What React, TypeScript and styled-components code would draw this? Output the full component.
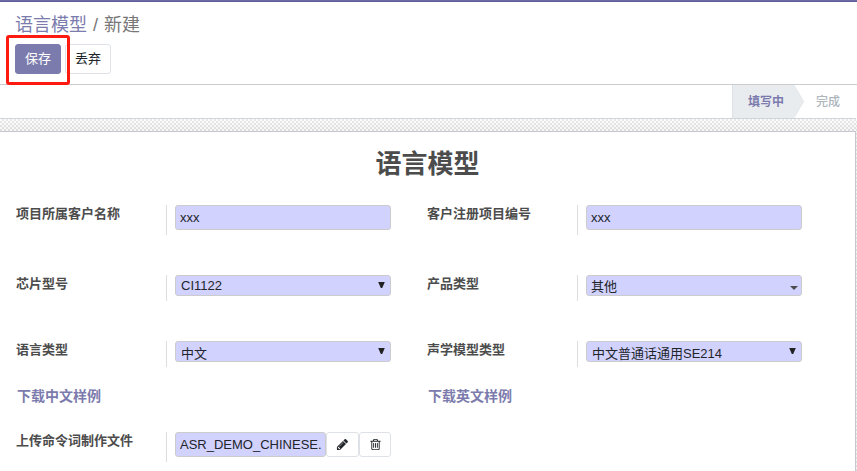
import React from "react";
import styled, { createGlobalStyle } from "styled-components";

const GlobalStyle = createGlobalStyle`
  *, *::before, *::after { box-sizing: border-box; }
  html, body { margin: 0; padding: 0; overflow: hidden; }
  body {
    background: #fff;
    color: #4c4c4c;
    font: 13px/19px "Liberation Sans", "Noto Sans CJK SC", sans-serif;
  }
  button { font: inherit; margin: 0; }
`;

const Page = styled.div`
  height: 471px;
  display: flex;
  flex-direction: column;
  overflow: hidden;
`;

const TopBar = styled.div`
  height: 2px;
  flex: none;
  background: #5f5e97;
  border-top: 1px solid #6c6ba6;
`;

const ControlPanel = styled.header`
  height: 83px;
  flex: none;
  padding: 10px 15px 0;
  border-bottom: 1px solid #cccccc;
`;

const Breadcrumb = styled.nav`
  display: flex;
  height: 27px;
  font-size: 18px;
  line-height: 27px;
  color: #777;
  white-space: pre;
`;

const Crumb = styled.span`
  color: #7c7bad;
`;

const Separator = styled.span`
  width: 17px;
  text-align: center;
`;

const Actions = styled.div`
  display: flex;
  gap: 4px;
  margin-top: 5px;
`;

const Highlighted = styled.div`
  position: relative;
`;

const HighlightFrame = styled.span`
  position: absolute;
  left: -9px;
  top: -9px;
  width: 64px;
  height: 50px;
  border: 3px solid #ff1a10;
  border-radius: 3px;
  z-index: 1;
`;

const Button = styled.button<{ $primary?: boolean }>`
  display: block;
  width: 46px;
  height: 30px;
  padding: 0;
  line-height: 28px;
  border-radius: 3px;
  border: 1px solid ${(p) => (p.$primary ? "#7c7bad" : "#dee2e6")};
  background: ${(p) => (p.$primary ? "#7c7bad" : "#fff")};
  color: ${(p) => (p.$primary ? "#fff" : "#212529")};
`;

const StatusBar = styled.div`
  display: flex;
  justify-content: flex-end;
  flex: none;
  height: 34px;
  margin-right: 1px;
  border-bottom: 1px solid #ced4da;
  font-size: 12px;
  line-height: 35px;
  font-weight: 700;
`;

const ActiveStage = styled.div`
  display: flex;
  height: 33px;
  color: #7c7bad;
`;

const StageLabel = styled.span`
  width: 62px;
  padding-left: 15px;
  background: #e9ecef;
  border-left: 1px solid #dee2e6;
`;

const StageArrow = styled.svg`
  display: block;
  width: 10px;
  height: 33px;
`;

const Stage = styled.div`
  width: 52px;
  height: 33px;
  padding-left: 12px;
  color: #adb5bd;
  font-weight: 500;
`;

const Backdrop = styled.div`
  flex: 1;
  padding-top: 12px;
  padding-right: 1px;
  background:
    linear-gradient(rgba(255, 255, 255, 0.3), rgba(215, 215, 215, 0.2) 12px),
    repeating-conic-gradient(#dfdfdf 0 25%, #fcfcfc 0 50%) 0 0 / 4px 4px;
`;

const Sheet = styled.main`
  height: 100%;
  border: solid #c8c8d3;
  border-width: 1px 1px 0 0;
  background: #fff;
  padding: 13px 0 0 16px;
`;

const Title = styled.h1`
  margin: 0 0 22px;
  width: 823px;
  font-size: 26px;
  line-height: 38px;
  text-align: center;
`;

const Row = styled.div<{ $height: number }>`
  display: grid;
  grid-template-columns: 411px 411px;
  align-items: start;
  height: ${(p) => p.$height}px;
`;

const Field = styled.div<{ $height: number }>`
  display: grid;
  grid-template-columns: 150px 225px;
  height: ${(p) => p.$height}px;
`;

const Label = styled.label`
  font-weight: 700;
  line-height: 18px;
`;

const Cell = styled.div`
  display: flex;
  align-items: flex-start;
  border-left: 1px solid #ddd;
  padding-left: 8px;
`;

const TextBox = styled.div<{ $width?: number }>`
  width: ${(p) => p.$width ?? 216}px;
  height: 25px;
  padding: 0 4px;
  line-height: 24px;
  border: 1px solid #ccc;
  border-radius: 3px;
  background: #d2d2ff;
  color: #212529;
  white-space: nowrap;
`;

const SelectBox = styled.div<{ $inset: number; $drop: number }>`
  display: flex;
  justify-content: space-between;
  width: 216px;
  height: 21px;
  padding: 0 6px 0 ${(p) => p.$inset}px;
  line-height: ${(p) => 19 + p.$drop}px;
  border: 1px solid #ccc;
  border-radius: 3px;
  background: #d2d2ff;
  color: #212529;
  white-space: nowrap;
`;

const Arrow = styled.svg`
  display: block;
  width: 7px;
  height: 6px;
  margin: 6px -1px 0 0;
`;

const Caret = styled.svg`
  display: block;
  width: 8px;
  height: 4px;
  margin: 10px -3px 0 0;
`;

const SampleLink = styled.a`
  padding-left: 1px;
  font-size: 14px;
  line-height: 20px;
  font-weight: 700;
  color: #7c7bad;
`;

const IconButton = styled.button<{ $width: number }>`
  display: flex;
  align-items: center;
  justify-content: center;
  width: ${(p) => p.$width}px;
  height: 25px;
  padding: 0;
  border: 1px solid #dee2e6;
  border-radius: 3px;
  background: #fff;
  color: #212529;
`;

const Glyph = styled.svg`
  display: block;
  width: 13px;
  height: 13px;
  fill: currentColor;
`;

const PENCIL =
  "M491 1536l91-91-235-235-91 91v107h128v128h107zm523-928q0-22-22-22-10 0-17 7l-542 542q-7 7-7 17 0 22 22 22 10 0 17-7l542-542q7-7 7-17zm-54-192l416 416-832 832h-416v-416zm683 96q0 53-37 90l-166 166-416-416 166-165q36-38 90-38 53 0 91 38l235 234q37 39 37 91z";
const TRASH =
  "M704 736v576q0 14-9 23t-23 9h-64q-14 0-23-9t-9-23v-576q0-14 9-23t23-9h64q14 0 23 9t9 23zm256 0v576q0 14-9 23t-23 9h-64q-14 0-23-9t-9-23v-576q0-14 9-23t23-9h64q14 0 23 9t9 23zm256 0v576q0 14-9 23t-23 9h-64q-14 0-23-9t-9-23v-576q0-14 9-23t23-9h64q14 0 23 9t9 23zm128 724v-948h-896v948q0 22 7 40.5t14.5 27 10.5 8.5h832q3 0 10.5-8.5t14.5-27 7-40.5zm-672-1076h448l-48-117q-7-9-17-11h-317q-10 2-17 11zm928 32v64q0 14-9 23t-23 9h-96v948q0 83-47 143.5t-113 60.5h-832q-66 0-113-58.5t-47-141.5v-952h-96q-14 0-23-9t-9-23v-64q0-14 9-23t23-9h309l70-167q15-37 54-63t79-26h320q40 0 79 26t54 63l70 167h309q14 0 23 9t9 23z";

function Select({ value, drop = 0 }: { value: string; drop?: number }) {
  return (
    <SelectBox $inset={5} $drop={drop}>
      {value}
      <Arrow viewBox="0 0 7 6">
        <path d="M0.2 0h6.6L4.2 6H2.8z" fill="#212121" />
      </Arrow>
    </SelectBox>
  );
}

function FormField({
  label,
  height,
  children,
}: {
  label: string;
  height: number;
  children: React.ReactNode;
}) {
  return (
    <Field $height={height}>
      <Label>{label}</Label>
      <Cell>{children}</Cell>
    </Field>
  );
}

export default function App() {
  return (
    <Page>
      <GlobalStyle />
      <TopBar />
      <ControlPanel>
        <Breadcrumb>
          <Crumb>语言模型</Crumb>
          <Separator>/</Separator>
          <span>新建</span>
        </Breadcrumb>
        <Actions>
          <Highlighted>
            <Button $primary>保存</Button>
            <HighlightFrame />
          </Highlighted>
          <Button>丢弃</Button>
        </Actions>
      </ControlPanel>
      <StatusBar>
        <ActiveStage>
          <StageLabel>填写中</StageLabel>
          <StageArrow viewBox="0 0 10 33">
            <path d="M0 0L9.7 16.5L0 33z" fill="#e9ecef" />
            <path d="M0 0L9.7 16.5L0 33" fill="none" stroke="#dee2e6" strokeWidth="0.7" />
          </StageArrow>
        </ActiveStage>
        <Stage>完成</Stage>
      </StatusBar>
      <Backdrop>
        <Sheet>
          <Title>语言模型</Title>
          <Row $height={70}>
            <FormField label="项目所属客户名称" height={30}>
              <TextBox>xxx</TextBox>
            </FormField>
            <FormField label="客户注册项目编号" height={30}>
              <TextBox>xxx</TextBox>
            </FormField>
          </Row>
          <Row $height={66}>
            <FormField label="芯片型号" height={26}>
              <Select value="CI1122" />
            </FormField>
            <FormField label="产品类型" height={26}>
              <SelectBox $inset={4} $drop={2}>
                其他
                <Caret viewBox="0 0 8 4">
                  <path d="M0 0h8L4 4z" fill="#4c4c4c" />
                </Caret>
              </SelectBox>
            </FormField>
          </Row>
          <Row $height={45}>
            <FormField label="语言类型" height={26}>
              <Select value="中文" drop={4} />
            </FormField>
            <FormField label="声学模型类型" height={26}>
              <Select value="中文普通话通用SE214" drop={4} />
            </FormField>
          </Row>
          <Row $height={46}>
            <SampleLink>下载中文样例</SampleLink>
            <SampleLink>下载英文样例</SampleLink>
          </Row>
          <Row $height={39}>
            <FormField label="上传命令词制作文件" height={30}>
              <TextBox $width={151}>ASR_DEMO_CHINESE.</TextBox>
              <IconButton $width={33} aria-label="编辑">
                <Glyph viewBox="0 0 1792 1792">
                  <path d={PENCIL} />
                </Glyph>
              </IconButton>
              <IconButton $width={32} aria-label="删除">
                <Glyph viewBox="0 0 1792 1792">
                  <path d={TRASH} />
                </Glyph>
              </IconButton>
            </FormField>
          </Row>
        </Sheet>
      </Backdrop>
    </Page>
  );
}
